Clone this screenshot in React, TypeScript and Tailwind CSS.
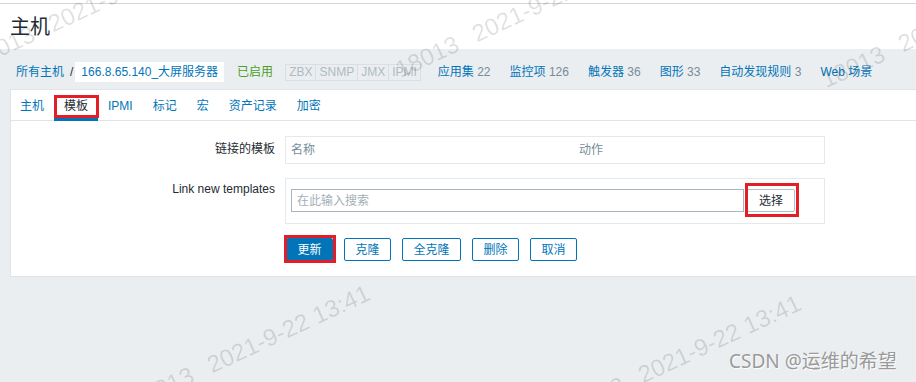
import React from 'react';

const font = "font-['Liberation_Sans','Noto_Sans_CJK_SC',sans-serif]";

const Mark: React.FC<{ className: string }> = ({ className }) => (
  <div
    className={`pointer-events-none absolute origin-bottom-left -rotate-[25deg] whitespace-nowrap text-[24px] leading-none text-black/[0.13] ${className}`}
  >
    18013<span className="ml-[18px]">2021-9-22 13:41</span>
  </div>
);

const RedBox: React.FC<{ className: string }> = ({ className }) => (
  <div className={`pointer-events-none absolute border-[3px] border-[#e41e26] ${className}`} />
);

const stats: [string, number | null][] = [
  ['应用集', 22],
  ['监控项', 126],
  ['触发器', 36],
  ['图形', 33],
  ['自动发现规则', 3],
  ['Web 场景', null],
];

const tabs = ['主机', '模板', 'IPMI', '标记', '宏', '资产记录', '加密'];

const App: React.FC = () => {
  return (
    <div className={`relative h-[382px] w-[916px] overflow-hidden bg-[#ebeef0] text-[12px] text-[#1f2c33] ${font}`}>
      {/* page title */}
      <div className="h-[49px] bg-white pt-[3px]">
        <div className="flex h-[46px] items-center border-t border-[#d6d6d6] px-[10px] text-[20px] text-[#1f2c33]">
          主机
        </div>
      </div>

      {/* breadcrumb bar */}
      <div className="flex h-[40px] items-center pl-[16px] pt-[6px]">
        <span className="text-[#0275b8]">所有主机</span>
        <span className="ml-[6px] mr-[2px] text-[#1f2c33]">/</span>
        <span className="flex h-[20px] items-center bg-white px-[6px] text-[#0275b8]">166.8.65.140_大屏服务器</span>
        <span className="ml-[13px] text-[#4c9f2a]">已启用</span>
        <div className="ml-[12px] flex h-[17px] items-stretch border border-[#d9dfe3] text-[#aebbc2]">
          <span className="flex items-center px-[3px]">ZBX</span>
          <span className="flex items-center border-l border-[#d9dfe3] px-[3px]">SNMP</span>
          <span className="flex items-center border-l border-[#d9dfe3] px-[3px]">JMX</span>
          <span className="flex items-center border-l border-[#d9dfe3] px-[3px]">IPMI</span>
        </div>
        <div className="ml-[17px] flex gap-[19px]">
          {stats.map(([name, n]) => (
            <span key={name} className="text-[#0275b8]">
              {name}
              {n !== null && <span className="text-[#768d99]"> {n}</span>}
            </span>
          ))}
        </div>
      </div>

      {/* card */}
      <div className="ml-[10px] w-[910px] border border-[#dfe4e7] bg-white pb-[15px]">
        <div className="-ml-px flex h-[31px] border-b border-[#dfe4e7]">
          {tabs.map((t) => {
            const active = t === '模板';
            return (
              <div
                key={t}
                className={`relative flex h-full items-center px-[10px] pt-[2px] ${active ? 'text-[#1f2c33]' : 'text-[#0275b8]'}`}
              >
                {t}
                {active && (
                  <>
                    <div className="absolute bottom-[-1px] left-0 right-0 h-[3px] bg-[#0275b8]" />
                    <RedBox className="left-0 right-[-1px] top-[5px] bottom-[2px]" />
                  </>
                )}
              </div>
            );
          })}
        </div>

        <div className="mt-[15px] flex flex-col gap-[14px]">
          <div className="flex items-start">
            <div className="w-[264px] pt-[6px] text-right leading-[14px]">链接的模板</div>
            <div className="ml-[10px] flex h-[28px] w-[540px] items-center border border-[#e6e9eb] px-[5px] text-[#768d99]">
              <span className="w-[288px]">名称</span>
              <span>动作</span>
            </div>
          </div>

          <div className="flex items-start">
            <div className="w-[264px] pt-[4px] text-right leading-[14px]">Link new templates</div>
            <div className="ml-[10px] flex h-[46px] w-[540px] items-start border border-[#e6e9eb] px-[5px] pt-[10px]">
              <div className="flex h-[23px] w-[453px] items-center border border-[#a8b6be] px-[5px] text-[#a3b0b7]">
                在此输入搜索
              </div>
              <div className="relative ml-[3px] flex h-[23px] w-[48px] items-center justify-center rounded-[2px] border border-[#b3bfc6] bg-white text-[#1f2c33]">
                选择
                <RedBox className="left-[-3px] right-[-5px] top-[-7px] bottom-[-6px]" />
              </div>
            </div>
          </div>

          <div className="ml-[275px] flex gap-[11px]">
            <div className="relative flex h-[23px] w-[47px] items-center justify-center rounded-[2px] bg-[#0275b8] text-white">
              更新
              <RedBox className="left-[-2px] right-[-3px] top-[-3px] bottom-[-2px]" />
            </div>
            {['克隆', '全克隆', '删除', '取消'].map((b) => (
              <div
                key={b}
                className={`flex h-[23px] items-center justify-center rounded-[2px] border border-[#0275b8] bg-white text-[#0275b8] ${b === '全克隆' ? 'w-[59px]' : 'w-[47px]'}`}
              >
                {b}
              </div>
            ))}
          </div>
        </div>
      </div>

      {/* watermarks */}
      <Mark className="left-[-22px] top-[48px]" />
      <Mark className="left-[402px] top-[58px]" />
      <Mark className="left-[828px] top-[68px]" />
      <Mark className="left-[137px] top-[389px]" />
      <Mark className="left-[568px] top-[399px]" />

      <div className="absolute left-[729px] top-[352px] whitespace-nowrap font-['Noto_Sans','Noto_Sans_CJK_SC',sans-serif] text-[19px] leading-none text-[#9a9a9a] [text-shadow:1px_1px_1px_#fff]">
        CSDN @运维的希望
      </div>
    </div>
  );
};

export default App;
